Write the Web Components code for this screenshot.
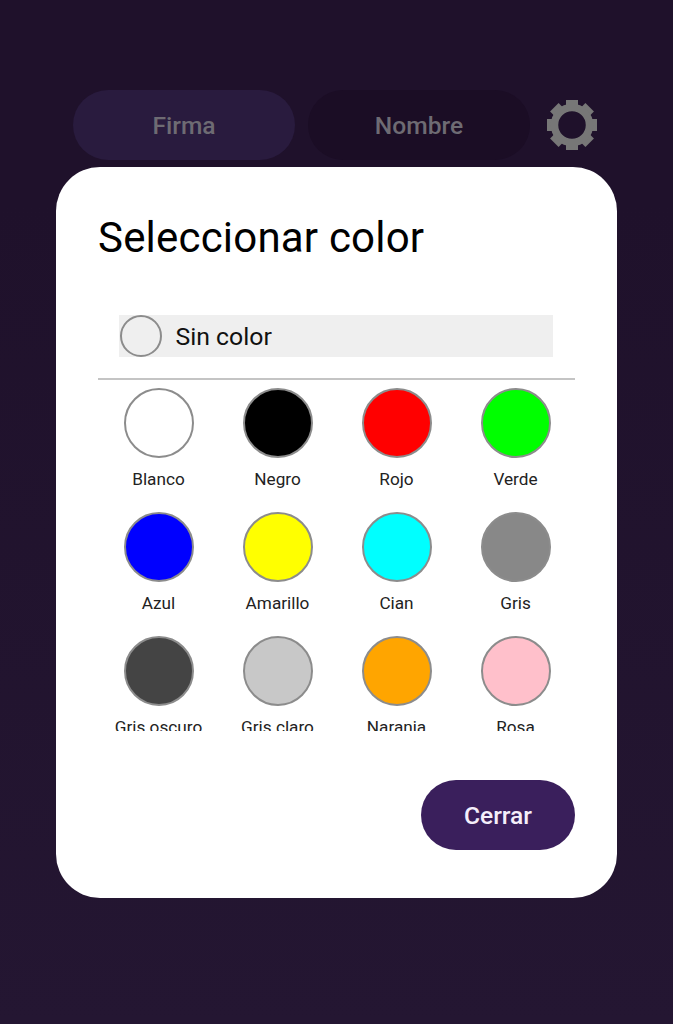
<!DOCTYPE html>
<html lang="es">
<head>
<meta charset="utf-8">
<title>Seleccionar color</title>
<style>
html,body{margin:0;height:100%}
body{background:linear-gradient(#1f112b,#1f112b 20%,#241632);font-family:Roboto,"Liberation Sans",sans-serif;overflow:hidden}
</style>
</head>
<body>
<app-screen>
    <tab-pill slot="tabs" tone="on">Firma</tab-pill>
    <tab-pill slot="tabs">Nombre</tab-pill>
    <gear-icon slot="tabs"></gear-icon>

    <color-dialog heading="Seleccionar color">
        <no-color>Sin color</no-color>
        <color-swatch slot="grid" color="#ffffff">Blanco</color-swatch>
        <color-swatch slot="grid" color="#000000">Negro</color-swatch>
        <color-swatch slot="grid" color="#ff0000">Rojo</color-swatch>
        <color-swatch slot="grid" color="#00ff00">Verde</color-swatch>
        <color-swatch slot="grid" color="#0000ff">Azul</color-swatch>
        <color-swatch slot="grid" color="#ffff00">Amarillo</color-swatch>
        <color-swatch slot="grid" color="#00ffff">Cian</color-swatch>
        <color-swatch slot="grid" color="#888888">Gris</color-swatch>
        <color-swatch slot="grid" color="#444444">Gris oscuro</color-swatch>
        <color-swatch slot="grid" color="#c8c8c8">Gris claro</color-swatch>
        <color-swatch slot="grid" color="#ffa500">Naranja</color-swatch>
        <color-swatch slot="grid" color="#ffc0cb">Rosa</color-swatch>
        <close-button slot="actions">Cerrar</close-button>
    </color-dialog>
</app-screen>

<script>
class AppScreen extends HTMLElement{
    constructor(){
        super()
        this.attachShadow({mode:'open'})
    }
    connectedCallback(){
        this.shadowRoot.innerHTML=`
        <style>
        :host{display:block;padding:90px 56px 0}
        .tabs{
            display:flex;
            align-items:center;
            height:70px;
            margin:0 0 7px 17px;
        }
        </style>
        <div class="tabs"><slot name="tabs"></slot></div>
        <slot></slot>
        `
    }
}

class TabPill extends HTMLElement{
    constructor(){
        super()
        this.attachShadow({mode:'open'})
    }
    connectedCallback(){
        let bg=this.getAttribute("tone")==="on"?"#291b3e":"#1b0d25"
        this.shadowRoot.innerHTML=`
        <style>
        :host{
            display:flex;
            justify-content:center;
            align-items:center;
            width:222px;
            height:70px;
            margin-right:13px;
            border-radius:35px;
            background:${bg};
            color:#6e6b73;
            font:500 24.6px Roboto,sans-serif;
        }
        </style>
        <slot></slot>
        `
    }
}

class GearIcon extends HTMLElement{
    constructor(){
        super()
        this.attachShadow({mode:'open'})
    }
    connectedCallback(){
        let teeth=""
        for (let a=0;a<360;a+=45){
            teeth+=`<rect x="-6" y="-25" width="12" height="8" transform="rotate(${a})"/>`
        }
        this.shadowRoot.innerHTML=`
        <style>
        :host{display:block;width:50px;height:50px;margin-left:4px}
        svg{display:block}
        </style>
        <svg width="50" height="50" viewBox="-25 -25 50 50" fill="#777777">
            ${teeth}
            <circle r="17.5" fill="none" stroke="#777777" stroke-width="7.5"/>
        </svg>
        `
    }
}

class ColorDialog extends HTMLElement{
    constructor(){
        super()
        this.attachShadow({mode:'open'})
    }
    connectedCallback(){
        this.shadowRoot.innerHTML=`
        <style>
        :host{
            display:block;
            width:561px;
            height:731px;
            box-sizing:border-box;
            padding:47px 42px 48px;
            background:#ffffff;
            border-radius:44px;
            color:#000000;
            font-family:Roboto,sans-serif;
        }
        h2{
            margin:0 0 53px;
            font-size:42px;
            line-height:48px;
            font-weight:400;
            letter-spacing:.2px;
        }
        .top{padding:0 22px 21px 21px;border-bottom:2px solid #c4c4c4}
        .scroll{height:351px;overflow:hidden;padding:8px 0 0 1px;box-sizing:border-box}
        .grid{display:grid;grid-template-columns:repeat(4,1fr)}
        .actions{display:flex;justify-content:flex-end;margin-top:49px}
        </style>
        <h2>${this.getAttribute("heading")}</h2>
        <div class="top"><slot></slot></div>
        <div class="scroll"><div class="grid"><slot name="grid"></slot></div></div>
        <div class="actions"><slot name="actions"></slot></div>
        `
    }
}

class NoColor extends HTMLElement{
    constructor(){
        super()
        this.attachShadow({mode:'open'})
    }
    connectedCallback(){
        this.shadowRoot.innerHTML=`
        <style>
        :host{
            display:flex;
            align-items:center;
            gap:14px;
            height:42px;
            background:#efefef;
            font:24.8px Roboto,sans-serif;
            color:#111111;
        }
        i{
            width:42px;
            height:42px;
            flex:none;
            box-sizing:border-box;
            border:2px solid #8c8c8c;
            border-radius:50%;
            margin-left:.5px;
        }
        </style>
        <i></i><span><slot></slot></span>
        `
    }
}

class ColorSwatch extends HTMLElement{
    constructor(){
        super()
        this.attachShadow({mode:'open'})
    }
    connectedCallback(){
        this.shadowRoot.innerHTML=`
        <style>
        :host{
            display:flex;
            flex-direction:column;
            align-items:center;
            height:124px;
            font:17.2px Roboto,sans-serif;
            color:#222222;
        }
        i{
            width:70px;
            height:70px;
            box-sizing:border-box;
            border:2px solid #8c8c8c;
            border-radius:50%;
            background:${this.getAttribute("color")};
            margin-bottom:11px;
        }
        span{line-height:20px;white-space:nowrap}
        </style>
        <i></i><span><slot></slot></span>
        `
    }
}

class CloseButton extends HTMLElement{
    constructor(){
        super()
        this.attachShadow({mode:'open'})
    }
    connectedCallback(){
        this.shadowRoot.innerHTML=`
        <style>
        :host{
            display:flex;
            justify-content:center;
            align-items:center;
            width:154px;
            height:70px;
            border-radius:35px;
            background:#3a1f5c;
            color:#f4eefa;
            font:500 24.6px Roboto,sans-serif;
        }
        </style>
        <slot></slot>
        `
    }
}

window.customElements.define("app-screen",AppScreen)
window.customElements.define("tab-pill",TabPill)
window.customElements.define("gear-icon",GearIcon)
window.customElements.define("color-dialog",ColorDialog)
window.customElements.define("no-color",NoColor)
window.customElements.define("color-swatch",ColorSwatch)
window.customElements.define("close-button",CloseButton)
</script>
</body>
</html>
